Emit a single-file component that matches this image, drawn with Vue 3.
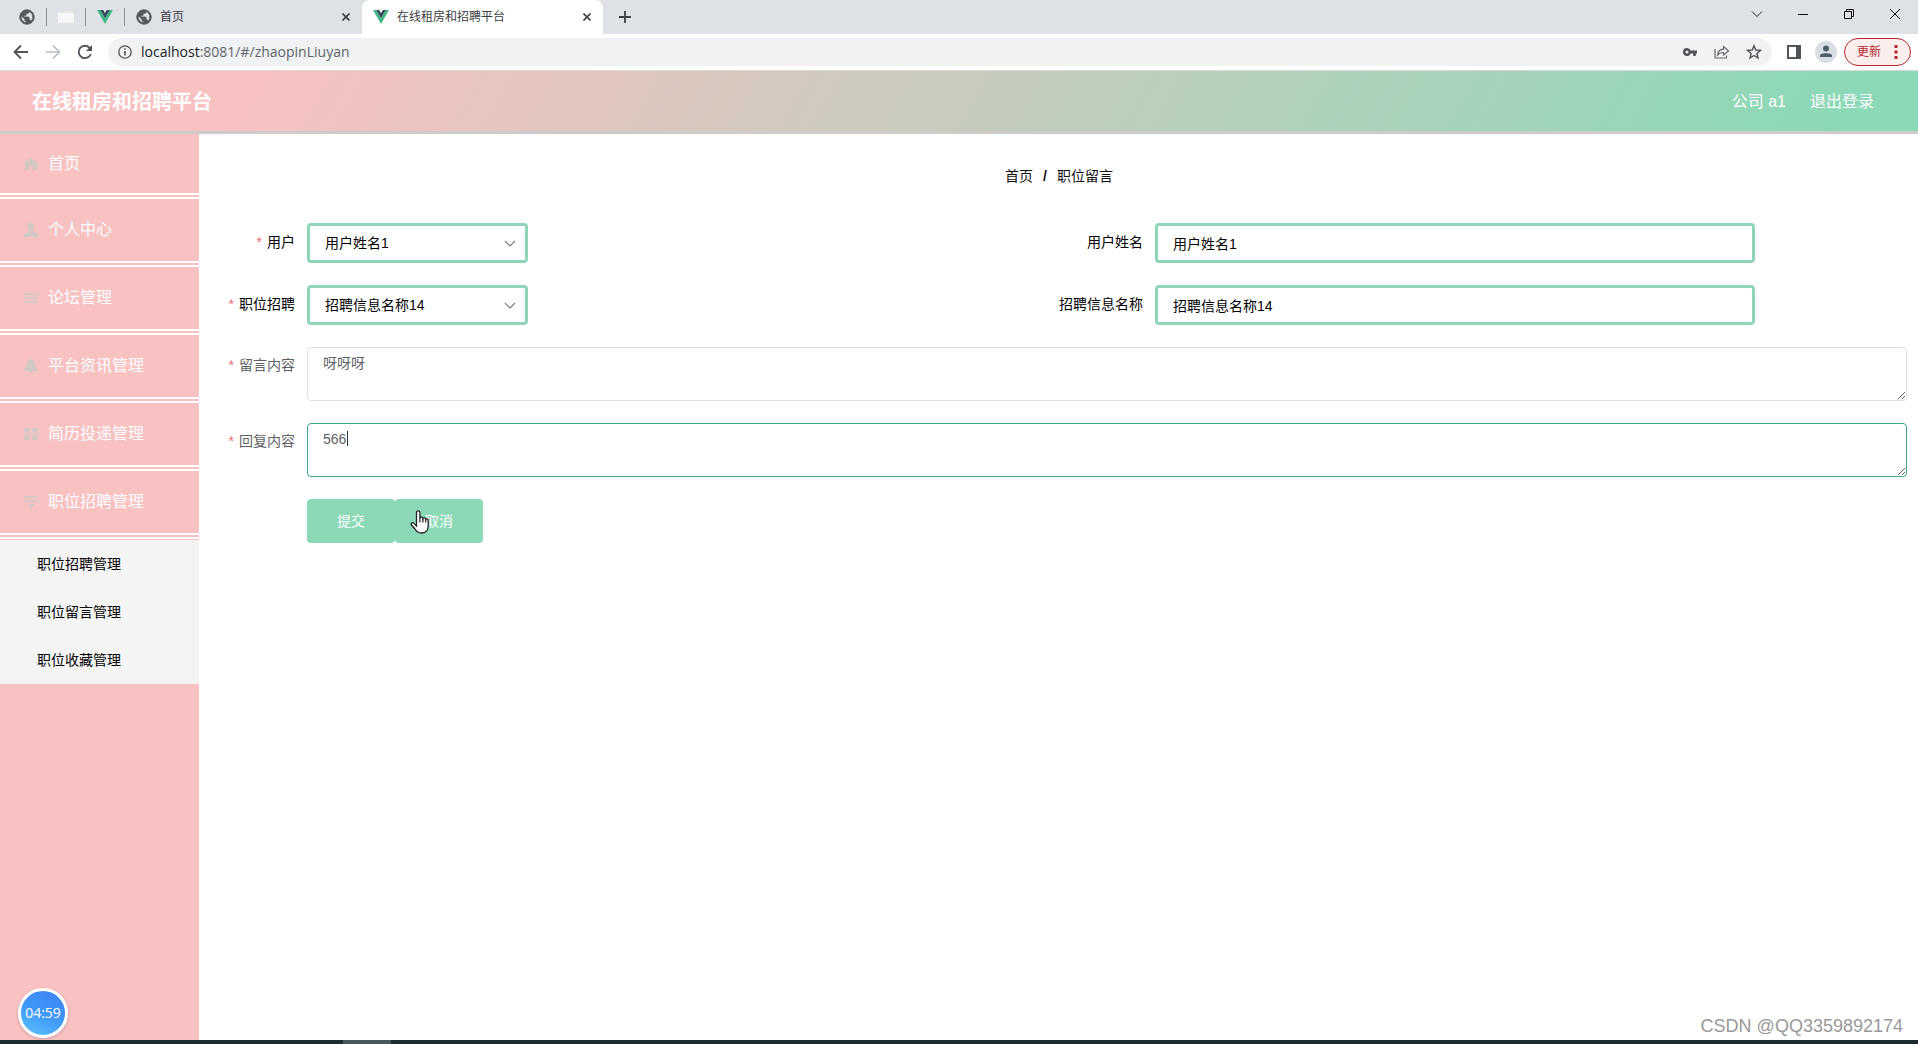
<script setup>
import { ref } from 'vue'

const menus = [
  { title: '首页', icon: 'home' },
  { title: '个人中心', icon: 'user' },
  { title: '论坛管理', icon: 'list' },
  { title: '平台资讯管理', icon: 'bell' },
  { title: '简历投递管理', icon: 'grid' },
  { title: '职位招聘管理', icon: 'filter' }
]
const subMenus = ['职位招聘管理', '职位留言管理', '职位收藏管理']

const iconPaths = {
  home: 'M7 1 14 6v2h-1v5H9V9H5v4H1V8H0V6Z',
  user: 'M7 0a3.4 3.4 0 0 1 2 6.2L8.6 8 14 11v3H0v-3l5.4-3L5 6.2A3.4 3.4 0 0 1 7 0Z',
  list: 'M0 2h14v2H0ZM0 6h14v2H0ZM0 10h14v2H0Z',
  bell: 'M7 0c3 1 4 3 4 6l3 5v1H9l-2 2-2-2H0v-1l3-5c0-3 1-5 4-6Z',
  grid: 'M0 1h6v5H0ZM8 1h6v5H8ZM0 8h6v5H0ZM8 8h6v5H8Z',
  filter: 'M0 1h14v2H0ZM1 5h12v2H1ZM4 9h6v2H4ZM6 12h2v2H6Z'
}
const globe = 'M12 2C6.480 2 2 6.480 2 12s4.480 10 10 10 10-4.480 10-10S17.520 2 12 2zm-1 17.930c-3.950-.49-7-3.850-7-7.930 0-.62.080-1.210.21-1.790L9 15v1c0 1.100.9 2 2 2v1.930zm6.900-2.540c-.26-.81-1-1.390-1.900-1.390h-1v-3c0-.55-.45-1-1-1H8v-2h2c.55 0 1-.45 1-1V7h2c1.100 0 2-.9 2-2v-.41c2.930 1.190 5 4.060 5 7.410 0 2.080-.8 3.970-2.100 5.390z'

const user = ref('用户姓名1')
const job = ref('招聘信息名称14')
const userName = ref('用户姓名1')
const jobName = ref('招聘信息名称14')
const message = ref('呀呀呀')
const reply = ref('566')
</script>

<template>
  <div class="window">
    <div class="tabs">
      <div class="pinned">
        <svg width="16" height="16" viewBox="1 1 22 22"><path :d="globe" fill="#54585d" stroke="#54585d" /></svg>
      </div>
      <div class="pinned">
        <svg width="16" height="14" viewBox="0 0 16 14"><path d="M0 1h16v12H0Z" fill="#f6f7f7" /><path d="M0 1h16v2H0Z" fill="#e4e8e5" /></svg>
      </div>
      <div class="pinned">
        <svg width="16" height="14" viewBox="0 0 16 14"><path d="M0 0h3.200L8 8.300 12.800 0H16L8 14Z" fill="#41b883" /><path d="M3.200 0h3L8 3.200 9.800 0h3L8 8.300Z" fill="#35495e" /></svg>
      </div>
      <div class="tab">
        <svg width="16" height="16" viewBox="1 1 22 22"><path :d="globe" fill="#54585d" stroke="#54585d" /></svg>
        <span>首页</span>
        <button type="button" class="close" aria-label="关闭"><svg width="8" height="8" viewBox="0 0 8 8"><path d="m.5.5 7 7m0-7-7 7" stroke="#3c4043" stroke-width="1.600" /></svg></button>
      </div>
      <div class="tab active">
        <svg width="16" height="14" viewBox="0 0 16 14"><path d="M0 0h3.200L8 8.300 12.800 0H16L8 14Z" fill="#41b883" /><path d="M3.200 0h3L8 3.200 9.800 0h3L8 8.300Z" fill="#35495e" /></svg>
        <span>在线租房和招聘平台</span>
        <button type="button" class="close" aria-label="关闭"><svg width="8" height="8" viewBox="0 0 8 8"><path d="m.5.5 7 7m0-7-7 7" stroke="#3c4043" stroke-width="1.600" /></svg></button>
      </div>
      <button type="button" class="plus" aria-label="新标签页"><svg width="12" height="12" viewBox="0 0 12 12"><path d="M6 0v12M0 6h12" stroke="#3c4043" stroke-width="1.800" /></svg></button>
      <div class="controls">
        <button type="button" aria-label="搜索标签页"><svg width="12" height="12" viewBox="0 0 12 12"><path d="m1 3.500 5 5 5-5" fill="none" stroke="#202124" /></svg></button>
        <button type="button" aria-label="最小化"><svg width="12" height="12" viewBox="0 0 12 12"><path d="M1 6.500h10" stroke="#111" /></svg></button>
        <button type="button" aria-label="还原"><svg width="12" height="12" viewBox="0 0 12 12"><path d="M1.500 3.500h7v7h-7ZM3.500 3V1.500h7v7H9" fill="none" stroke="#111" /></svg></button>
        <button type="button" aria-label="关闭窗口"><svg width="12" height="12" viewBox="0 0 12 12"><path d="m1 1 10 10M11 1 1 11" stroke="#111" /></svg></button>
      </div>
    </div>

    <div class="toolbar">
      <button type="button" class="tool" aria-label="后退"><svg width="16" height="16" viewBox="0 0 16 16"><path d="M15 8H2M8 1.500 1.500 8 8 14.500" fill="none" stroke="#505357" stroke-width="1.800" /></svg></button>
      <button type="button" class="tool" aria-label="前进"><svg width="16" height="16" viewBox="0 0 16 16"><path d="M1 8h13M8 1.500 14.500 8 8 14.500" fill="none" stroke="#b9bcbf" stroke-width="1.600" /></svg></button>
      <button type="button" class="tool" aria-label="刷新"><svg width="16" height="16" viewBox="0 0 16 16"><path d="M13.800 10A6.200 6.200 0 1 1 12.600 3.800" fill="none" stroke="#505357" stroke-width="1.900" /><path d="M15 1v6H9Z" fill="#505357" /></svg></button>
      <div class="omnibox">
        <svg width="14" height="14" viewBox="0 0 14 14"><circle cx="7" cy="7" r="6.200" fill="none" stroke="#505357" stroke-width="1.300" /><path d="M7 6v4.500M7 3.200v1.600" stroke="#505357" stroke-width="1.600" /></svg>
        <span class="url"><b>localhost</b>:8081/#/zhaopinLiuyan</span>
        <button type="button" class="tool" aria-label="密码"><svg width="14" height="8" viewBox="0 0 14 8"><path fill-rule="evenodd" d="M4 0a4 4 0 0 1 3.700 2.600H14v2.800h-1.200V8h-2.600V5.400H7.700A4 4 0 1 1 4 0Zm0 2.500a1.500 1.500 0 1 0 0 3 1.500 1.500 0 0 0 0-3Z" fill="#505357" /></svg></button>
        <button type="button" class="tool" aria-label="分享"><svg width="16" height="14" viewBox="0 0 16 14"><path d="M1 4v9h11.500v-2.500M3.500 10C4 6.500 6 4.500 9.500 4.200V1.500l5 4.500-5 4V7.500C7 7.400 5 8.200 3.500 10Z" fill="none" stroke="#64676b" stroke-width="1.200" /></svg></button>
        <button type="button" class="tool" aria-label="收藏"><svg width="16" height="16" viewBox="0 0 16 16"><path d="m8 1.700 1.800 4.300 4.700.4-3.600 3 1.100 4.600-4-2.500L4 14l1.100-4.600-3.600-3L6.200 6Z" fill="none" stroke="#505357" stroke-width="1.400" /></svg></button>
      </div>
      <svg width="14" height="14" viewBox="0 0 14 14"><path d="M1 1h12v12H1Z" fill="none" stroke="#505357" stroke-width="2" /><path d="M9 1h4v12H9Z" fill="#505357" /></svg>
      <svg class="avatar" width="22" height="22" viewBox="0 0 22 22"><circle cx="11" cy="11" r="11" fill="#d9dde4" /><circle cx="11" cy="7.500" r="3" fill="#505b6b" /><path d="M5 16v-1.500c0-3 12-3 12 0V16Z" fill="#505b6b" /></svg>
      <button type="button" class="update">更新<svg width="4" height="14" viewBox="0 0 4 14"><path d="M.5 0h3v3h-3ZM.5 5.500h3v3h-3ZM.5 11h3v3h-3Z" fill="#b3272d" /></svg></button>
    </div>

    <header class="header">
      <h1>在线租房和招聘平台</h1>
      <span>公司 a1</span>
      <a href="#/login">退出登录</a>
    </header>

    <div class="body">
      <nav class="sidebar">
        <a v-for="menu in menus" :key="menu.title" href="#/" class="menu-item">
          <svg width="14" height="14" viewBox="0 0 14 14"><path :d="iconPaths[menu.icon]" fill="#d3c8c4" /></svg>
          {{ menu.title }}
        </a>
        <div class="submenu">
          <a v-for="item in subMenus" :key="item" href="#/zhaopinLiuyan">{{ item }}</a>
        </div>
        <div class="timer">04:59</div>
      </nav>

      <main class="main">
        <div class="breadcrumb"><a href="#/">首页</a><b>/</b><span>职位留言</span></div>
        <form class="form" @submit.prevent>
          <div class="row">
            <div class="field">
              <label for="user" class="required dark">用户</label>
              <div class="select">
                <select id="user" v-model="user" class="box"><option>用户姓名1</option></select>
                <svg width="12" height="8" viewBox="0 0 12 8"><path d="m1 1 5 5 5-5" fill="none" stroke="#77797d" stroke-width="1.100" /></svg>
              </div>
            </div>
            <div class="field">
              <label for="userName" class="dark">用户姓名</label>
              <input id="userName" v-model="userName" class="box" type="text">
            </div>
          </div>
          <div class="row">
            <div class="field">
              <label for="job" class="required dark">职位招聘</label>
              <div class="select">
                <select id="job" v-model="job" class="box"><option>招聘信息名称14</option></select>
                <svg width="12" height="8" viewBox="0 0 12 8"><path d="m1 1 5 5 5-5" fill="none" stroke="#77797d" stroke-width="1.100" /></svg>
              </div>
            </div>
            <div class="field">
              <label for="jobName" class="dark">招聘信息名称</label>
              <input id="jobName" v-model="jobName" class="box" type="text">
            </div>
          </div>
          <div class="field">
            <label for="message" class="required">留言内容</label>
            <textarea id="message" v-model="message" />
          </div>
          <div class="field reply">
            <label for="reply" class="required">回复内容</label>
            <textarea id="reply" v-model="reply" class="focused" />
            <i class="caret" />
          </div>
          <div class="actions">
            <button type="submit">提交</button>
            <button type="button">取消</button>
            <svg class="pointer" width="20" height="24" viewBox="0 0 20 24"><path d="M6.500 14V2.500a1.700 1.700 0 0 1 3.400 0V8c.3-1.200 2.900-1.100 3 .5.500-1 2.700-.8 2.800.8.700-.9 2.500-.5 2.500 1.200V16c0 4-2.400 7-6.700 7-3.500 0-5-1.400-6.500-4L1.300 14.800c-.8-1.600 1-2.900 2.300-1.700L6.500 16Z" fill="#fff" stroke="#222" stroke-width="1.300" /><path d="M9.900 8v4.500m3-4v4m2.800-3.200v3.200" stroke="#222" stroke-width="1.200" /></svg>
          </div>
        </form>
      </main>
    </div>
    <div class="taskbar"><span /></div>
    <div class="watermark">CSDN @QQ3359892174</div>
  </div>
</template>

<style>
body {
  margin: 0;
}
</style>

<style scoped>
* {
  box-sizing: border-box;
}

.window {
  position: relative;
  display: flex;
  flex-direction: column;
  min-height: 100vh;
  background: #fff;
  color: #606266;
  font: 14px/20px "Liberation Sans", "Noto Sans CJK SC", sans-serif;
}

svg {
  display: block;
  flex: none;
}

a {
  color: inherit;
  text-decoration: none;
}

button,
input,
select,
textarea {
  font: inherit;
}

button {
  display: flex;
  align-items: center;
  justify-content: center;
  padding: 0;
  border: 0;
  background: none;
}

.tabs {
  display: flex;
  height: 34px;
  padding-left: 8px;
  background: #dee1e6;
  color: #3c4043;
  font-size: 12px;
}

.pinned {
  display: flex;
  align-items: center;
  justify-content: center;
  width: 39px;
  height: 18px;
  margin-top: 8px;
  border-right: 1px solid #8b8e93;
}

.tab {
  display: flex;
  align-items: center;
  gap: 8px;
  width: 237px;
  padding: 0 12px 0 11px;
}

.tab.active {
  width: 241px;
  border-radius: 8px 8px 0 0;
  background: #fff;
}

.close {
  width: 8px;
  margin-left: auto;
}

.plus {
  width: 44px;
}

.controls {
  display: flex;
  margin-left: auto;
  padding-bottom: 6px;
}

.controls button {
  width: 46px;
}

.toolbar {
  display: flex;
  align-items: center;
  height: 37px;
  padding: 0 7px 0 5px;
  border-bottom: 1px solid #dcd8d8;
}

.tool {
  width: 32px;
  height: 28px;
}

.omnibox {
  display: flex;
  flex: 1;
  align-items: center;
  height: 28px;
  margin: 0 15px 0 7px;
  padding: 0 2px 0 10px;
  border-radius: 14px;
  background: #f0f2f4;
}

.url {
  flex: 1;
  margin-left: 9px;
  color: #5f6368;
  font-family: "Open Sans", "Noto Sans", sans-serif;
}

.url b {
  color: #202124;
  font-weight: 400;
}

.avatar {
  margin: 0 7px 0 14px;
}

.update {
  gap: 13px;
  width: 67px;
  height: 28px;
  border: 1px solid #b3272d;
  border-radius: 14px;
  background: #fdeeee;
  color: #b3272d;
  font-size: 12px;
}

.header {
  display: flex;
  align-items: center;
  height: 63px;
  padding: 2px 44px 0 32px;
  border-bottom: 3px solid #cdcccb;
  background: linear-gradient(120deg, #f8c1c2 13%, #8bd9b7 96%);
  color: #fff;
  font-size: 16px;
}

.header h1 {
  flex: 1;
  margin: 0;
  font-size: 20px;
}

.header a {
  margin-left: 24px;
}

.body {
  display: flex;
  flex: 1;
}

.sidebar {
  display: flex;
  flex-direction: column;
  width: 199px;
  background: #f8c1c2;
}

.menu-item {
  display: flex;
  align-items: center;
  gap: 10px;
  height: 68px;
  padding-left: 24px;
  border-bottom: 6px double #fff;
  color: #fff;
  font-size: 16px;
}

.menu-item:first-child {
  height: 65px;
}

.submenu {
  border-top: 1px solid #f8c1c2;
  background: #f4f4f4;
  color: #000;
}

.submenu a {
  display: block;
  padding-left: 37px;
  line-height: 48px;
}

.timer {
  width: 50px;
  height: 50px;
  margin: auto 0 2px 18px;
  border: 3px solid #fff;
  border-radius: 50%;
  background: linear-gradient(25deg, #5cc4fb, #3f97f8 50%, #3d82f4);
  box-shadow: 0 1px 3px #c99a9c;
  color: #fff;
  font-family: "Open Sans", "Noto Sans", sans-serif;
  line-height: 44px;
  text-align: center;
}

.main {
  flex: 1;
  padding: 32px 11px 0 12px;
}

.breadcrumb {
  display: flex;
  justify-content: center;
  gap: 10px;
  color: #111;
}

.form {
  display: flex;
  flex-direction: column;
  gap: 22px;
  margin-top: 37px;
}

.row {
  display: grid;
  grid-template-columns: 1fr 1fr;
}

.field {
  display: flex;
}

.field label {
  flex: none;
  width: 96px;
  padding-right: 12px;
  line-height: 36px;
  text-align: right;
}

.field .dark {
  color: #000;
  line-height: 38px;
}

.required::before {
  margin-right: 5px;
  color: #f56c6c;
  content: "*";
}

.box {
  width: 600px;
  height: 40px;
  padding: 0 15px;
  border: 3px solid #91d5b9;
  border-radius: 4px;
  outline: 0;
  background: #fff;
  color: #000;
}

.select {
  position: relative;
}

.select .box {
  width: 221px;
  appearance: none;
}

.select svg {
  position: absolute;
  top: 17px;
  right: 12px;
  pointer-events: none;
}

textarea {
  flex: 1;
  height: 54px;
  padding: 5px 15px;
  border: 1px solid #dcdfe6;
  border-radius: 4px;
  outline: 0;
  color: #606266;
  line-height: 20px;
  resize: vertical;
}

.focused {
  border-color: #37a58a;
}

.reply {
  position: relative;
}

.caret {
  position: absolute;
  top: 8px;
  left: 136px;
  width: 1px;
  height: 15px;
  background: #333;
}

.actions {
  position: relative;
  display: flex;
  margin-left: 96px;
}

.actions button {
  width: 88px;
  height: 44px;
  border-radius: 4px;
  background: #8bd9b7;
  color: #fff;
}

.pointer {
  position: absolute;
  top: 11px;
  left: 103px;
}

.taskbar {
  height: 4px;
  background: #1c2c32;
}

.taskbar span {
  display: block;
  width: 48px;
  height: 4px;
  margin-left: 343px;
  background: #47575b;
}

.watermark {
  position: absolute;
  right: 15px;
  bottom: 8px;
  color: #999;
  font-size: 18px;
}
</style>
